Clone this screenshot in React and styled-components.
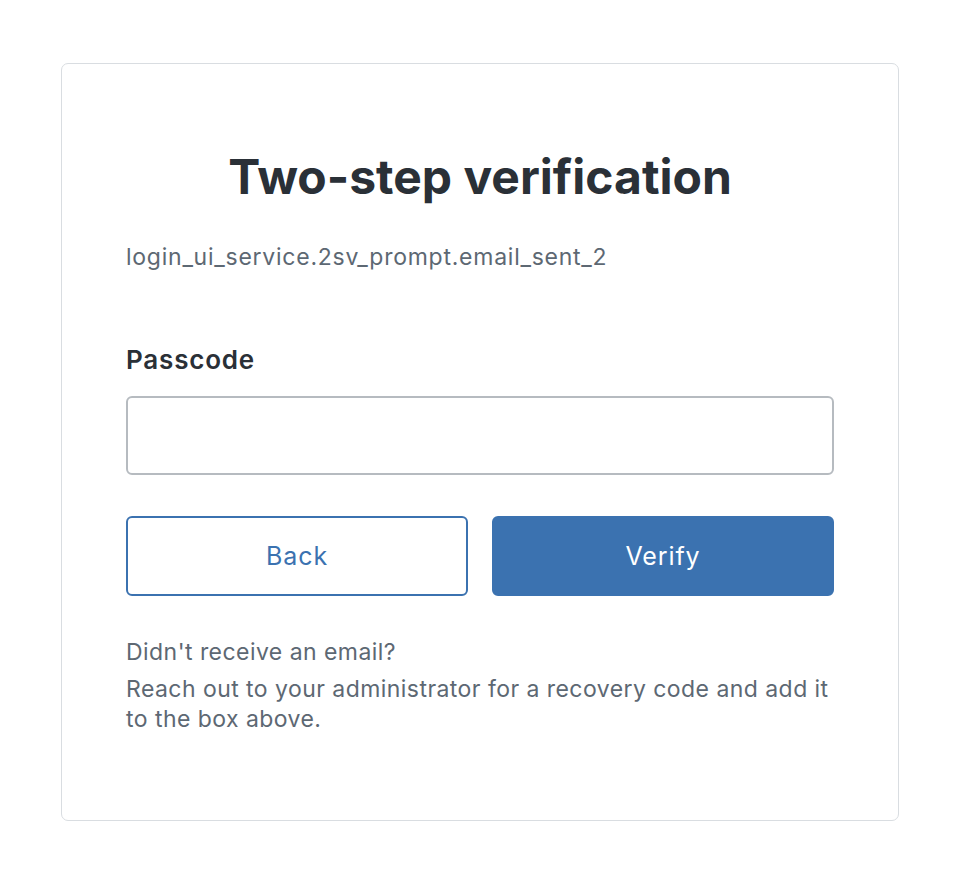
import React from 'react';
import styled, { createGlobalStyle } from 'styled-components';

const GlobalStyle = createGlobalStyle`
  * { box-sizing: border-box; }
  body {
    margin: 0;
    background: #ffffff;
    font-family: Inter, "Noto Sans", sans-serif;
    -webkit-font-smoothing: antialiased;
  }
`;

const Page = styled.div`
  padding: 63px 59px 68px 61px;
`;

const Card = styled.div`
  border: 1.5px solid #d9dde1;
  border-radius: 7px;
  padding: 84px 64px 86px;
  display: flex;
  flex-direction: column;
`;

const Title = styled.h1`
  margin: 0;
  font-size: 48px;
  line-height: 58px;
  font-weight: 700;
  color: #2a3037;
  text-align: center;
`;

const Hint = styled.p`
  margin: 36px 0 0;
  font-size: 23px;
  line-height: 30px;
  letter-spacing: 0.75px;
  color: #5d6873;
`;

const Label = styled.label`
  margin-top: 73px;
  font-size: 26px;
  line-height: 30px;
  font-weight: 600;
  letter-spacing: 0.8px;
  color: #2a3037;
`;

const Input = styled.input`
  margin-top: 21px;
  height: 79px;
  width: 100%;
  border: 2px solid #b6bbc0;
  border-radius: 6px;
  padding: 0 20px;
  font-size: 22px;
  font-family: inherit;
  outline: none;
`;

const Actions = styled.div`
  margin-top: 41px;
  display: grid;
  grid-template-columns: 1fr 1fr;
  gap: 24px;
`;

const Button = styled.button`
  height: 80px;
  border-radius: 6px;
  font-family: inherit;
  font-size: 25px;
  font-weight: 400;
  letter-spacing: 0.9px;
  cursor: pointer;
  border: 2px solid #3b72b0;
  background: ${p => (p.$primary ? '#3b72b0' : '#ffffff')};
  color: ${p => (p.$primary ? '#ffffff' : '#3b72b0')};
`;

const Help = styled.div`
  margin-top: 41px;
  display: flex;
  flex-direction: column;
  gap: 7px;
`;

const HelpText = styled.p`
  margin: 0;
  font-size: 23px;
  line-height: 30px;
  letter-spacing: 0.45px;
  color: #5d6873;
`;

export default function App() {
  return (
    <>
      <GlobalStyle />
      <Page>
        <Card>
          <Title>Two-step verification</Title>
          <Hint>login_ui_service.2sv_prompt.email_sent_2</Hint>
          <Label htmlFor="passcode">Passcode</Label>
          <Input id="passcode" type="text" />
          <Actions>
            <Button>Back</Button>
            <Button $primary>Verify</Button>
          </Actions>
          <Help>
            <HelpText>Didn't receive an email?</HelpText>
            <HelpText>
              Reach out to your administrator for a recovery code and add it to the box above.
            </HelpText>
          </Help>
        </Card>
      </Page>
    </>
  );
}
